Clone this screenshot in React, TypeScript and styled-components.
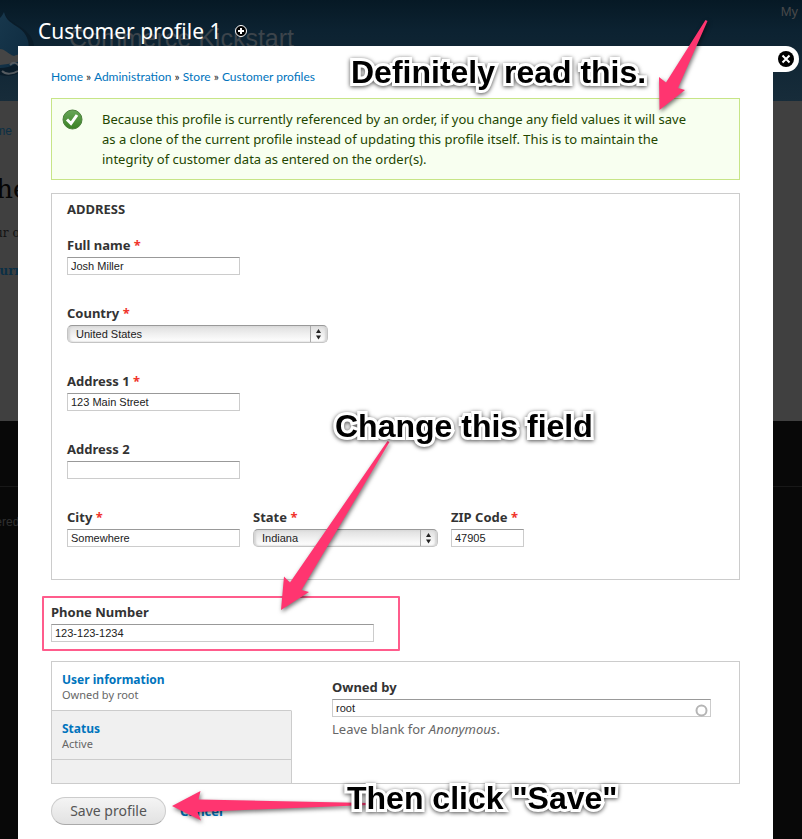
import React from "react";
import styled, { createGlobalStyle, css } from "styled-components";

const ui = `"Noto Sans", "Open Sans", sans-serif`;
const helv = `"Liberation Sans", Arial, sans-serif`;
const pink = "#ff3570";

const GlobalStyle = createGlobalStyle`
  *, *::before, *::after { box-sizing: border-box; }
  body { margin: 0; background: #080808; font-family: ${ui}; color: #333; }
`;

const Stage = styled.div`
  display: grid;
  grid-template-columns: minmax(0, 1fr);
  min-height: 100vh;
  position: relative;
  overflow: hidden;
`;

/* Dimmed page behind the overlay */
const Backdrop = styled.div`
  grid-area: 1 / 1;
  display: grid;
  grid-template-rows: 101px 320px 1fr;
  min-width: 0;
  overflow: hidden;
`;
const Banner = styled.div`
  display: flex;
  justify-content: space-between;
  align-items: flex-start;
  overflow: hidden;
  background: linear-gradient(#061925, #0c2231 30%, #172c3a);
`;
const Brand = styled.div`
  display: flex;
  align-items: flex-start;
  gap: 34px;
`;
const BrandName = styled.span`
  padding-top: 22px;
  font: 25px/32px ${helv};
  color: #3c444b;
`;
const Account = styled.span`
  padding: 4px 4px 0 0;
  font: 13px/16px ${helv};
  color: #48494a;
`;
const Body = styled.div`
  background: #404040;
  padding: 20px 0 0;
  margin-left: -22px;
  display: flex;
  flex-direction: column;
  align-items: flex-start;
  white-space: nowrap;
`;
const Crumb = styled.span`
  font: 12px/20px ${helv};
  color: #0b2f45;
  padding-left: 2px;
`;
const PageHeading = styled.span`
  font: 26px/40px "DejaVu Serif", serif;
  color: #050505;
  margin-top: 28px;
  padding-left: 1px;
`;
const PageLine = styled.span<{ $strong?: boolean }>`
  font: ${(p) => (p.$strong ? "bold" : "normal")} 12px/20px "DejaVu Serif", serif;
  color: ${(p) => (p.$strong ? "#0b2f45" : "#131313")};
  margin-top: ${(p) => (p.$strong ? "18px" : "14px")};
  padding-left: ${(p) => (p.$strong ? "12px" : "3px")};
`;
const Foot = styled.div`
  background: #080808;
  padding-top: 65px;
`;
const FootLine = styled.div`
  border-top: 1px solid #181818;
  margin-left: -28px;
  padding-top: 25px;
  font: 12px/20px ${helv};
  color: #303030;
`;

/* Overlay */
const Overlay = styled.div`
  grid-area: 1 / 1;
  z-index: 1;
  display: grid;
  grid-template-columns: minmax(0, 1fr) 26px;
  grid-template-rows: 46px 1fr;
  padding: 0 3px 0 18px;
`;
const TitleBar = styled.header`
  grid-column: 1 / -1;
  display: flex;
  align-items: center;
  gap: 13px;
  padding: 16px 0 0 20px;
`;
const Title = styled.h1`
  margin: 0;
  font: 21px/30px ${ui};
  color: #fff;
`;
const IconButton = styled.button`
  display: block;
  border: 0;
  padding: 0;
  background: none;
  line-height: 0;
`;
const Close = styled(IconButton)`
  width: 26px;
  height: 26px;
  padding: 5px;
  background: #fff;
  border-radius: 0 13px 13px 0;
`;
const Content = styled.main`
  background: #fff;
  padding: 21px 33px 14px;
`;
const Breadcrumb = styled.nav`
  font: 12px/20px Lato, ${ui};
  color: #222;
`;
const Link = styled.a`
  color: #0074bd;
  text-decoration: none;
`;
const Message = styled.div`
  display: flex;
  gap: 19px;
  margin-top: 11px;
  padding: 10px 40px 10px 10px;
  border: 1px solid #c7e587;
  background: #f8fff0;
  color: #234600;
`;
const MessageIcon = styled.svg`
  flex: none;
`;
const MessageText = styled.p`
  margin: 0;
  font: 13px/20px ${ui};
`;
const Fieldset = styled.section`
  margin-top: 13px;
  padding: 5px 15px 32px;
  border: 1px solid #ccc;
`;
const Legend = styled.h2`
  margin: 0 0 16px;
  font: bold 13px/20px ${ui};
`;
const Fields = styled.div`
  display: flex;
  flex-direction: column;
  gap: 28px;
`;
const Row = styled.div`
  display: flex;
  gap: 13px;
`;
const FieldBox = styled.div`
  display: flex;
  flex-direction: column;
  align-items: flex-start;
  gap: 2px;
`;
const Label = styled.label`
  font: bold 13px/20px ${ui};
`;
const Star = styled.span`
  color: #f0342c;
`;
const control = css`
  max-width: 100%;
  height: 18px;
  font: 11px/16px ${helv};
  color: #222;
`;
const Input = styled.input<{ $w: string }>`
  ${control}
  width: ${(p) => p.$w};
  padding: 0 3px;
  border: 1px solid #ccc;
  border-top-color: #999;
  border-radius: 0;
  background: #fff;
`;
const SelectWrap = styled.div<{ $w: string }>`
  width: ${(p) => p.$w};
  display: grid;
  align-items: center;
`;
const Select = styled.select`
  ${control}
  grid-area: 1 / 1;
  width: 100%;
  appearance: none;
  padding: 0 20px 0 8px;
  border: 1px solid #c4c4c4;
  border-top-color: #999;
  border-radius: 5px;
  background: linear-gradient(#dedede, #f0f0f0 50%, #fff);
  box-shadow: inset 2px 0 2px #d4d4d4, inset -2px 0 2px #d4d4d4;
`;
const Arrows = styled.svg`
  grid-area: 1 / 1;
  justify-self: end;
  pointer-events: none;
`;
const Phone = styled.div`
  position: relative;
  margin-top: 22px;
`;
const Highlight = styled.div`
  position: absolute;
  left: -9px;
  top: -6px;
  width: 358px;
  height: 55px;
  border: 2px solid #ff5c8c;
  border-radius: 1px;
  pointer-events: none;
`;
const Tabs = styled.div`
  display: grid;
  grid-template-columns: 240px minmax(0, 1fr);
  min-height: 123px;
  margin-top: 19px;
  border: 1px solid #ccc;
`;
const TabList = styled.div`
  display: flex;
  flex-direction: column;
`;
const Tab = styled.button<{ $active?: boolean }>`
  height: 49px;
  padding: 9px 10px 0;
  display: flex;
  flex-direction: column;
  text-align: left;
  border: 0;
  border-bottom: 1px solid #ccc;
  border-right: 1px solid ${(p) => (p.$active ? "transparent" : "#ccc")};
  background: ${(p) => (p.$active ? "#fff" : "#f0f0f0")};
`;
const TabName = styled.strong`
  font: bold 12px/18px ${ui};
  color: #0074bd;
`;
const TabNote = styled.span`
  font: 11px/12px ${ui};
  color: #666;
`;
const TabFill = styled.div`
  flex: 1;
  background: #f0f0f0;
  border-right: 1px solid #ccc;
`;
const Pane = styled.div`
  padding: 15px 28px 15px 40px;
`;
const Suggest = styled.div`
  display: grid;
  width: 100%;
  align-items: center;
`;
const SuggestInput = styled(Input)`
  grid-area: 1 / 1;
`;
const Throbber = styled.svg`
  grid-area: 1 / 1;
  justify-self: end;
  align-self: end;
  margin-right: 3px;
`;
const Help = styled.span`
  font: 13px/20px ${ui};
  color: #666;
`;
const Actions = styled.div`
  display: flex;
  align-items: center;
  gap: 14px;
  margin-top: 13px;
`;
const Save = styled.button`
  width: 115px;
  height: 28px;
  padding: 0;
  border: 1px solid #ccc;
  border-bottom-color: #aaa;
  border-radius: 14px;
  background: linear-gradient(#f4f4f4, #e2e2e2);
  font: 14px/20px ${ui};
  color: #555;
`;
const Cancel = styled(Link)`
  font: bold 13px/20px ${ui};
`;

/* Hand-placed notes and arrows on top of the page */
const Drawing = styled.svg`
  position: absolute;
  z-index: 2;
  left: 0;
  top: 0;
  pointer-events: none;
  filter: drop-shadow(1px 2px 2px rgba(0, 0, 0, 0.55));
`;
const Note = styled.div<{ $x: number; $y: number }>`
  position: absolute;
  z-index: 3;
  left: ${(p) => p.$x}px;
  top: ${(p) => p.$y}px;
  font: bold 32px/36px ${helv};
  color: #000;
  white-space: nowrap;
  pointer-events: none;
  paint-order: stroke fill;
  -webkit-text-stroke: 6px #fff;
  stroke-linejoin: round;
  filter: drop-shadow(0 1px 2px rgba(0, 0, 0, 0.7));
`;

type FieldProps = { id: string; label: string; required?: boolean; children: React.ReactNode };
const Field = ({ id, label, required, children }: FieldProps) => (
  <FieldBox>
    <Label htmlFor={id}>
      {label}
      {required && <Star> *</Star>}
    </Label>
    {children}
  </FieldBox>
);

const Dropdown = ({ id, value, width }: { id: string; value: string; width: string }) => (
  <SelectWrap $w={width}>
    <Select id={id} defaultValue={value}>
      <option>{value}</option>
    </Select>
    <Arrows width="18" height="16" viewBox="0 0 18 16" aria-hidden="true">
      <path d="M0.5 0V16" stroke="#aaa" />
      <path d="M6 7L8.500 3L11 7ZM6 9.500L8.500 13.500L11 9.500Z" fill="#222" />
    </Arrows>
  </SelectWrap>
);

export default function App() {
  return (
    <>
      <GlobalStyle />
      <Stage>
        <Backdrop aria-hidden="true">
          <Banner>
            <Brand>
              <svg width="35" height="80" viewBox="0 0 35 80">
                <defs>
                  <linearGradient id="drop" x1="0" y1="0" x2="1" y2="1">
                    <stop offset="0" stopColor="#17374c" />
                    <stop offset="1" stopColor="#0e2b40" />
                  </linearGradient>
                </defs>
                <path d="M4 12C8 21 15 23 22 28C31 34 35 42 34 52C32 66 20 76 6 76L0 75V18C2 16 3 14 4 12Z" fill="#0a1c29" />
                <path d="M4 12C6 21 12 23 19 28C27 34 30 42 28 51C24 62 10 68 0 68V18C2 16 3 14 4 12Z" fill="url(#drop)" />
                <path d="M0 49C5 49 8 54 14 56C18 54 24 53 26 57C22 62 10 64 0 65Z" fill="#454545" />
                <path d="M2 71C6 75 13 74 18 71M10 65C13 62 16 62 19 66" fill="none" stroke="#555b60" strokeWidth="2" />
              </svg>
              <BrandName>Commerce Kickstart</BrandName>
            </Brand>
            <Account>My</Account>
          </Banner>
          <Body>
            <Crumb>Home</Crumb>
            <PageHeading>The</PageHeading>
            <PageLine>Your o</PageLine>
            <PageLine $strong>Current</PageLine>
          </Body>
          <Foot>
            <FootLine>Powered</FootLine>
          </Foot>
        </Backdrop>

        <Overlay>
          <TitleBar>
            <Title>Customer profile 1</Title>
            <IconButton type="button" aria-label="Add to shortcuts">
              <svg width="14" height="14" viewBox="0 0 14 14">
                <circle cx="7" cy="7" r="5.500" fill="#000" stroke="#fff" />
                <path d="M7 4V10M4 7H10" stroke="#fff" strokeWidth="2" />
              </svg>
            </IconButton>
          </TitleBar>
          <Content>
            <Breadcrumb aria-label="Breadcrumb">
              <Link href="#home">Home</Link> » <Link href="#admin">Administration</Link> »{" "}
              <Link href="#store">Store</Link> » <Link href="#profiles">Customer profiles</Link>
            </Breadcrumb>
            <Message role="status">
              <MessageIcon width="21" height="21" viewBox="0 0 21 21" aria-hidden="true">
                <defs>
                  <linearGradient id="ok" x1="0" y1="0" x2="0" y2="1">
                    <stop offset="0" stopColor="#67a659" />
                    <stop offset="1" stopColor="#3a8123" />
                  </linearGradient>
                </defs>
                <circle cx="10.500" cy="10.500" r="9.500" fill="url(#ok)" stroke="#4b7f3b" />
                <path d="M5 10.500L9 14.500L15 6" fill="none" stroke="#fff" strokeWidth="3" />
              </MessageIcon>
              <MessageText>
                Because this profile is currently referenced by an order, if you change any field values it will save as
                a clone of the current profile instead of updating this profile itself. This is to maintain the
                integrity of customer data as entered on the order(s).
              </MessageText>
            </Message>

            <Fieldset aria-labelledby="address">
              <Legend id="address">ADDRESS</Legend>
              <Fields>
                <Field id="name" label="Full name" required>
                  <Input id="name" $w="173px" defaultValue="Josh Miller" />
                </Field>
                <Field id="country" label="Country" required>
                  <Dropdown id="country" value="United States" width="261px" />
                </Field>
                <Field id="addr1" label="Address 1" required>
                  <Input id="addr1" $w="173px" defaultValue="123 Main Street" />
                </Field>
                <Field id="addr2" label="Address 2">
                  <Input id="addr2" $w="173px" />
                </Field>
                <Row>
                  <Field id="city" label="City" required>
                    <Input id="city" $w="173px" defaultValue="Somewhere" />
                  </Field>
                  <Field id="state" label="State" required>
                    <Dropdown id="state" value="Indiana" width="185px" />
                  </Field>
                  <Field id="zip" label="ZIP Code" required>
                    <Input id="zip" $w="73px" defaultValue="47905" />
                  </Field>
                </Row>
              </Fields>
            </Fieldset>

            <Phone>
              <Field id="phone" label="Phone Number">
                <Input id="phone" $w="323px" defaultValue="123-123-1234" />
              </Field>
              <Highlight />
            </Phone>

            <Tabs>
              <TabList>
                <Tab type="button" $active>
                  <TabName>User information</TabName>
                  <TabNote>Owned by root</TabNote>
                </Tab>
                <Tab type="button">
                  <TabName>Status</TabName>
                  <TabNote>Active</TabNote>
                </Tab>
                <TabFill />
              </TabList>
              <Pane>
                <Field id="owner" label="Owned by">
                  <Suggest>
                    <SuggestInput id="owner" $w="100%" defaultValue="root" />
                    <Throbber width="13" height="13" viewBox="0 0 13 13" aria-hidden="true">
                      <circle cx="6.500" cy="6.500" r="5" fill="none" stroke="#b5b5b5" strokeWidth="2" />
                    </Throbber>
                  </Suggest>
                  <Help>
                    Leave blank for <em>Anonymous</em>.
                  </Help>
                </Field>
              </Pane>
            </Tabs>

            <Actions>
              <Save type="button">Save profile</Save>
              <Cancel href="#cancel">Cancel</Cancel>
            </Actions>
          </Content>
          <Close type="button" aria-label="Close">
            <svg width="16" height="16" viewBox="0 0 16 16">
              <circle cx="8" cy="8" r="8" fill="#000" />
              <path d="M4.500 4.500L11.500 11.500M11.500 4.500L4.500 11.500" stroke="#fff" strokeWidth="2" />
            </svg>
          </Close>
        </Overlay>

        <Drawing width="802" height="839" viewBox="0 0 802 839" fill={pink} aria-hidden="true">
          <path d="M705.500 20L707.500 21L678 88L685 90L659.500 110L659 77L666 82.500Z" />
          <path d="M387.500 441L389.500 442L301.500 590L309 592L281 610L284 576.500L290 582.500Z" />
          <path d="M172 806L200.500 791L198.500 799.500L368 803L368 805L197.500 812L201 820.500Z" />
        </Drawing>
        <Note $x={351} $y={54}>Definitely read this.</Note>
        <Note $x={335} $y={408}>Change this field</Note>
        <Note $x={347} $y={780}>Then click "Save"</Note>
      </Stage>
    </>
  );
}
